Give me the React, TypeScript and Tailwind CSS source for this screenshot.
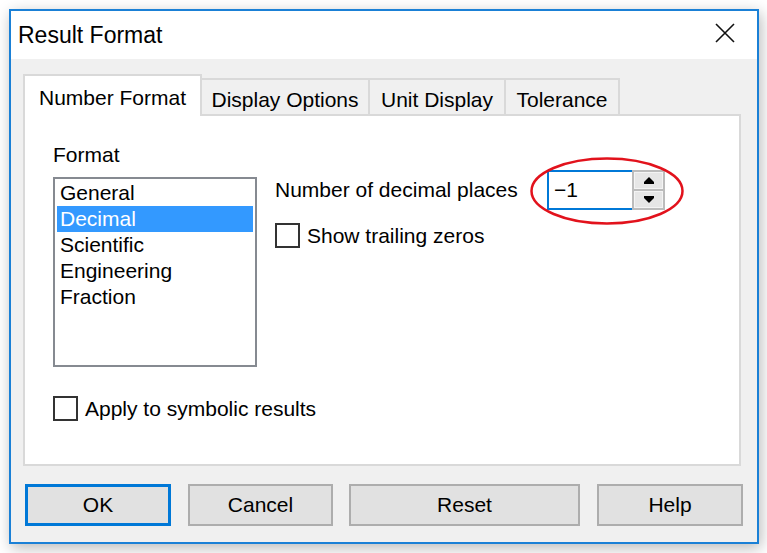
import React from "react";

const font = { fontFamily: '"Liberation Sans", Arial, sans-serif' };

function Checkbox({ label }: { label: string }) {
  return (
    <div className="flex items-center">
      <div className="w-[25px] h-[25px] border-2 border-[#333333] bg-white shrink-0" />
      <span className="ml-[7px] text-[21px] leading-[24px] text-black">{label}</span>
    </div>
  );
}

function SpinBox() {
  return (
    <div className="relative flex w-[118px] h-[40px] shrink-0">
      <div className="flex-1 flex items-center border-2 border-r-0 border-[#0078d7] bg-white pl-[5px] text-[21px] text-black">
        −1
      </div>
      <div className="w-[33px] h-[40px] bg-[#bcbcbc] p-[2px] flex flex-col gap-[2px]">
        <div className="flex-1 bg-[#e6e6e6] border border-[#f4f4f4] flex items-center justify-center">
          <svg width="10" height="7" viewBox="0 0 10 7">
            <path d="M5 0 L10 5 L0 5 Z" fill="#000" />
            <rect x="0" y="5" width="10" height="2" fill="#000" />
          </svg>
        </div>
        <div className="flex-1 bg-[#e6e6e6] border border-[#f4f4f4] flex items-center justify-center">
          <svg width="10" height="7" viewBox="0 0 10 7">
            <rect x="0" y="0" width="10" height="2" fill="#000" />
            <path d="M0 2 L10 2 L5 7 Z" fill="#000" />
          </svg>
        </div>
      </div>
      {/* red highlight ring */}
      <svg
        className="absolute left-[-17px] top-[-13px] pointer-events-none"
        width="154"
        height="68"
        viewBox="0 0 154 68"
      >
        <ellipse cx="77" cy="34" rx="75.5" ry="32.5" fill="none" stroke="#e2121c" strokeWidth="2.5" />
      </svg>
    </div>
  );
}

const tabs = [
  { name: "Number Format", w: "w-[179px]" },
  { name: "Display Options", w: "w-[168px]" },
  { name: "Unit Display", w: "w-[136px]" },
  { name: "Tolerance", w: "w-[114px]" },
];

const items = ["General", "Decimal", "Scientific", "Engineering", "Fraction"];

export default function App() {
  return (
    <div className="w-[767px] h-[553px] bg-white pl-[9px] pt-[9px] overflow-hidden" style={font}>
      <div className="w-[750px] h-[535px] border-2 border-[#1a80d6] flex flex-col shadow-[2px_4px_14px_rgba(0,0,0,0.28)]">
        {/* Title bar */}
        <div className="h-[48px] bg-white flex items-center justify-between pl-[7px] pr-[22px] shrink-0">
          <span className="text-[23px] text-black">Result Format</span>
          <svg className="-mt-[4px]" width="20" height="20" viewBox="0 0 20 20">
            <path d="M1 1 L19 19 M19 1 L1 19" stroke="#111" strokeWidth="1.6" />
          </svg>
        </div>

        {/* Body */}
        <div className="flex-1 bg-[#f0f0f0] pl-[12px] pr-[16px] pt-[15px] pb-[15px] flex flex-col">
          {/* Tabs */}
          <div className="flex items-end h-[40px] shrink-0">
            {tabs.map((t, i) =>
              i === 0 ? (
                <div
                  key={t.name}
                  className={`${t.w} h-[42px] -mb-[2px] relative z-10 bg-white border-2 border-b-0 border-[#d9d9d9] flex justify-center pt-[6px] text-[21px] text-black shrink-0`}
                >
                  {t.name}
                </div>
              ) : (
                <div
                  key={t.name}
                  className={`${t.w} h-[36px] bg-[#f0f0f0] border-2 border-b-0 border-l-0 border-[#d9d9d9] flex justify-center pt-[4px] text-[21px] text-black shrink-0`}
                >
                  {t.name}
                </div>
              )
            )}
          </div>

          {/* Panel */}
          <div className="h-[352px] bg-white border-2 border-[#d9d9d9] pl-[28px] pt-[27px] shrink-0">
            <div className="flex">
              <div className="flex flex-col">
                <span className="text-[21px] text-black leading-[24px]">Format</span>
                <div className="mt-[10px] w-[204px] h-[190px] border-2 border-[#868a91] bg-white px-[2px] pt-[1px]">
                  {items.map((it) => (
                    <div
                      key={it}
                      className={`h-[26px] flex items-center pl-[3px] text-[21px] ${
                        it === "Decimal" ? "bg-[#3399ff] text-white" : "text-black"
                      }`}
                    >
                      {it}
                    </div>
                  ))}
                </div>
              </div>

              <div className="ml-[18px] mt-[27px] flex flex-col">
                <div className="flex items-center h-[40px]">
                  <span className="w-[272px] text-[21px] text-black">Number of decimal places</span>
                  <SpinBox />
                </div>
                <div className="mt-[13px]">
                  <Checkbox label="Show trailing zeros" />
                </div>
              </div>
            </div>

            <div className="mt-[29px]">
              <Checkbox label="Apply to symbolic results" />
            </div>
          </div>

          {/* Buttons */}
          <div className="mt-[18px] flex pl-[2px] shrink-0">
            <button className="shrink-0 w-[146px] h-[42px] bg-[#e1e1e1] border-[3px] border-[#0078d7] text-[21px] text-black">
              OK
            </button>
            <button className="shrink-0 ml-[17px] w-[145px] h-[42px] bg-[#e1e1e1] border-2 border-[#adadad] text-[21px] text-black">
              Cancel
            </button>
            <button className="shrink-0 ml-[16px] w-[231px] h-[42px] bg-[#e1e1e1] border-2 border-[#adadad] text-[21px] text-black">
              Reset
            </button>
            <button className="shrink-0 ml-[17px] w-[146px] h-[42px] bg-[#e1e1e1] border-2 border-[#adadad] text-[21px] text-black">
              Help
            </button>
          </div>
        </div>
      </div>
    </div>
  );
}
